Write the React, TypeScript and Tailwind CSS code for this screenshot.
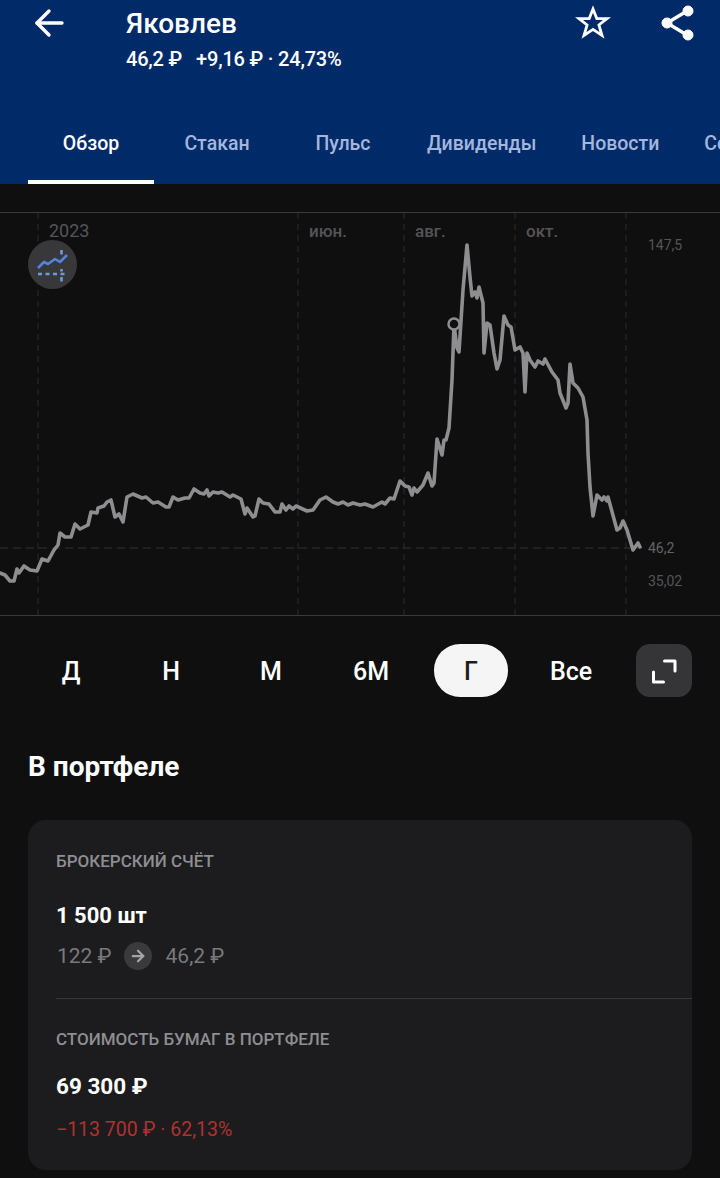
import { ArrowRight } from "lucide-react";

const tabs = ["Обзор", "Стакан", "Пульс", "Дивиденды", "Новости", "Сообщество"];
const periods = ["Д", "Н", "М", "6М", "Г", "Все"];

// price line, x/y in page pixels minus chart top (184)
const raw = [
  [0, 573], [5, 575], [10, 581], [14, 581], [17, 569], [19, 573], [24, 566], [30, 570], [37, 571], [42, 559],
  [48, 561], [54, 550], [58, 545], [60, 533], [65, 537], [71, 537], [75, 524], [80, 529], [88, 525], [91, 512],
  [97, 513], [98, 508], [104, 506], [107, 502], [111, 500], [115, 517], [119, 514], [123, 522], [127, 497], [133, 494],
  [142, 498], [146, 497], [153, 503], [158, 502], [166, 507], [169, 507], [173, 497], [178, 500], [185, 498], [189, 498],
  [194, 489], [200, 493], [204, 494], [207, 490], [209, 496], [213, 492], [218, 493], [222, 492], [230, 497], [233, 495],
  [241, 499], [245, 514], [247, 508], [253, 517], [255, 516], [259, 499], [263, 503], [269, 504], [275, 512], [280, 512],
  [282, 504], [286, 510], [289, 506], [293, 509], [296, 506], [307, 511], [313, 510], [320, 500], [326, 497], [333, 502],
  [338, 504], [343, 502], [348, 505], [353, 503], [360, 505], [365, 504], [373, 507], [382, 502], [385, 504], [390, 498],
  [394, 499], [400, 481], [405, 486], [409, 487], [412, 495], [414, 488], [417, 492], [423, 485], [428, 473], [432, 486],
  [434, 483], [437, 439], [442, 455], [444, 440], [446, 440], [449, 428], [452, 380], [454, 325], [457, 348], [459, 352],
  [463, 290], [467, 245], [470, 277], [472, 296], [475, 292], [477, 298], [479, 287], [483, 303], [484, 353], [487, 323],
  [490, 325], [494, 353], [497, 369], [500, 360], [504, 316], [508, 325], [511, 327], [515, 350], [520, 347], [523, 353],
  [525, 392], [527, 353], [530, 360], [535, 367], [538, 361], [543, 364], [545, 359], [552, 372], [558, 380], [560, 393],
  [566, 408], [568, 403], [570, 364], [573, 383], [578, 388], [583, 397], [587, 420], [588, 453], [590, 487], [593, 516],
  [597, 495], [602, 500], [604, 497], [607, 501], [608, 497], [617, 530], [620, 528], [623, 521], [627, 530], [633, 550],
  [638, 543], [640, 547],
];
const points = raw.map(([x, y]) => `${x},${y - 184}`).join(" ");

function ChartLines() {
  return (
    <svg className="absolute inset-0" width="720" height="432" viewBox="0 0 720 432" fill="none">
      <line x1="0" y1="28.5" x2="720" y2="28.5" stroke="#3a3a3c" />
      <line x1="0" y1="431.5" x2="720" y2="431.5" stroke="#3a3a3c" />
      <line x1="0" y1="364" x2="640" y2="364" stroke="#333335" strokeDasharray="8 5" />
      {[38, 298, 404, 515, 626].map((x) => (
        <line key={x} x1={x} y1="29" x2={x} y2="431" stroke="#2c2c2e" strokeDasharray="6 5" />
      ))}
      <polyline points={points} stroke="#8e8e90" strokeWidth="3.6" strokeLinejoin="round" strokeLinecap="round" />
      <circle cx="454" cy="140" r="5.5" fill="#0f0f10" stroke="#8e8e90" strokeWidth="2.5" />
    </svg>
  );
}

function BackIcon() {
  return (
    <svg width="32" height="30" viewBox="0 0 32 30" fill="none" stroke="white" strokeWidth="3.4" strokeLinecap="round" strokeLinejoin="round" className="overflow-visible">
      <path d="M3 14H28" />
      <path d="M15 2L3 14L15 26" />
    </svg>
  );
}

function StarIcon() {
  return (
    <svg width="36" height="36" viewBox="0 0 36 36" fill="none" stroke="white" strokeWidth="2.8" strokeLinejoin="miter">
      <path d="M18 5L21.8 14.6H32L23.9 21L27 31.5L18 25.4L9 31.5L12.1 21L4 14.6H14.2Z" />
    </svg>
  );
}

function ShareIcon() {
  return (
    <svg width="36" height="38" viewBox="0 0 36 38" fill="white" stroke="white">
      <path d="M27 7L7 19L27 31" fill="none" strokeWidth="3.4" />
      <circle cx="28" cy="7" r="5" />
      <circle cx="7" cy="19" r="5" />
      <circle cx="28" cy="31" r="5" />
    </svg>
  );
}

function TrendIcon() {
  return (
    <svg width="34" height="36" viewBox="0 0 34 36" fill="none" stroke="#4f86d9">
      <path d="M2 21L8 15L12 17L19 12L24 15L31 8" strokeWidth="2.6" strokeLinejoin="round" />
      <path d="M2 27H31" strokeWidth="2.6" strokeDasharray="4 3.5" stroke="#6f9ad9" />
      <path d="M25.5 3V7.5M25.5 22V24.5M25.5 30V34.5" strokeWidth="2.6" stroke="#6f9ad9" />
    </svg>
  );
}

function ExpandIcon() {
  return (
    <svg width="28" height="28" viewBox="0 0 28 28" fill="none" stroke="white" strokeWidth="3" strokeLinecap="round" strokeLinejoin="round">
      <path d="M14.5 4H25V14" />
      <path d="M3.5 15V25H13.5" />
    </svg>
  );
}

export default function App() {
  return (
    <div className="w-[720px] h-[1178px] overflow-hidden bg-[#0f0f10] font-['Roboto',sans-serif]">
      {/* Header */}
      <div className="h-[184px] bg-[#002a68] flex flex-col">
        <div className="h-[102px] flex items-start">
          <div className="w-[126px] pl-[34px] pt-[9px]">
            <BackIcon />
          </div>
          <div className="flex-1 pt-[7px]">
            <div className="text-[28px] leading-[34px] font-medium text-white">Яковлев</div>
            <div className="mt-[5px] flex gap-[14px] text-[20px] leading-[26px] font-medium text-white tracking-[-0.2px]">
              <span>46,2 ₽</span>
              <span>+9,16 ₽ · 24,73%</span>
            </div>
          </div>
          <div className="pt-[4px] pr-[49px]">
            <StarIcon />
          </div>
          <div className="pt-[4px] pr-[24px]">
            <ShareIcon />
          </div>
        </div>
        <div className="flex h-[82px] pl-[28px] overflow-hidden">
          {tabs.map((tab, i) => (
            <div
              key={tab}
              className={
                i === 0
                  ? "min-w-[126px] shrink-0 px-[21px] pt-[28px] text-center text-[19.5px] leading-[28px] font-medium text-white border-b-4 border-white"
                  : "min-w-[126px] shrink-0 px-[21px] pt-[28px] text-center text-[19.5px] leading-[28px] font-medium text-[#a3b7de]"
              }
            >
              {tab}
            </div>
          ))}
        </div>
      </div>

      {/* Chart */}
      <div className="relative h-[432px]">
        <ChartLines />
        <span className="absolute left-[49px] top-[36px] text-[18px] leading-[22px] text-[#555557]">2023</span>
        <span className="absolute left-[309px] top-[37px] text-[17px] leading-[20px] font-medium text-[#555557]">июн.</span>
        <span className="absolute left-[415px] top-[37px] text-[17px] leading-[20px] font-medium text-[#555557]">авг.</span>
        <span className="absolute left-[526px] top-[37px] text-[17px] leading-[20px] font-medium text-[#555557]">окт.</span>
        <span className="absolute left-[648px] top-[52px] text-[14px] leading-[18px] text-[#555557]">147,5</span>
        <span className="absolute left-[648px] top-[355px] text-[14px] leading-[18px] text-[#636365]">46,2</span>
        <span className="absolute left-[648px] top-[388px] text-[14px] leading-[18px] text-[#555557]">35,02</span>
        <div className="absolute left-[28px] top-[56px] w-[49px] h-[49px] rounded-full bg-[#38383a] flex items-center justify-center">
          <TrendIcon />
        </div>
      </div>

      {/* Periods */}
      <div className="flex items-center pl-[21px] mt-[28px] h-[53px]">
        {periods.map((p) => (
          <div key={p} className="w-[100px] flex justify-center">
            <div
              className={
                p === "Г"
                  ? "w-[74px] h-[53px] pt-[2px] rounded-[26px] bg-[#f5f5f6] text-[#1c1c1e] flex items-center justify-center text-[25px] font-medium"
                  : "w-[74px] h-[53px] pt-[2px] text-white flex items-center justify-center text-[25px] font-medium"
              }
            >
              {p}
            </div>
          </div>
        ))}
        <div className="ml-[15px] w-[56px] h-[53px] rounded-[14px] bg-[#353537] flex items-center justify-center">
          <ExpandIcon />
        </div>
      </div>

      {/* Portfolio */}
      <h2 className="mt-[51px] ml-[28px] text-[28px] leading-[38px] font-bold text-white">В портфеле</h2>

      <div className="mx-[28px] mt-[34px] h-[350px] rounded-[18px] bg-[#1c1c1e] pl-[28px]">
        <div className="h-[179px] pt-[30px] border-b border-[#37373a]">
          <div className="text-[17px] leading-[22px] font-medium text-[#8e8e93]">БРОКЕРСКИЙ СЧЁТ</div>
          <div className="mt-[30px] text-[22px] leading-[28px] font-bold text-white">1 500 шт</div>
          <div className="mt-[12px] flex items-center text-[21px] leading-[28px] text-[#79797d]">
            <span className="ml-[1px]">122 ₽</span>
            <span className="ml-[12px] mr-[14px] w-[28px] h-[28px] rounded-full bg-[#3a3a3c] flex items-center justify-center">
              <ArrowRight size={18} strokeWidth={3} className="text-[#a5a5a8]" />
            </span>
            <span>46,2 ₽</span>
          </div>
        </div>
        <div className="pt-[29px]">
          <div className="text-[17px] leading-[22px] font-medium text-[#8e8e93]">СТОИМОСТЬ БУМАГ В ПОРТФЕЛЕ</div>
          <div className="mt-[22px] text-[22.5px] leading-[28px] font-bold text-white">69 300 ₽</div>
          <div className="mt-[16px] text-[19.5px] leading-[28px] text-[#b3302e]">−113 700 ₽ · 62,13%</div>
        </div>
      </div>
    </div>
  );
}
